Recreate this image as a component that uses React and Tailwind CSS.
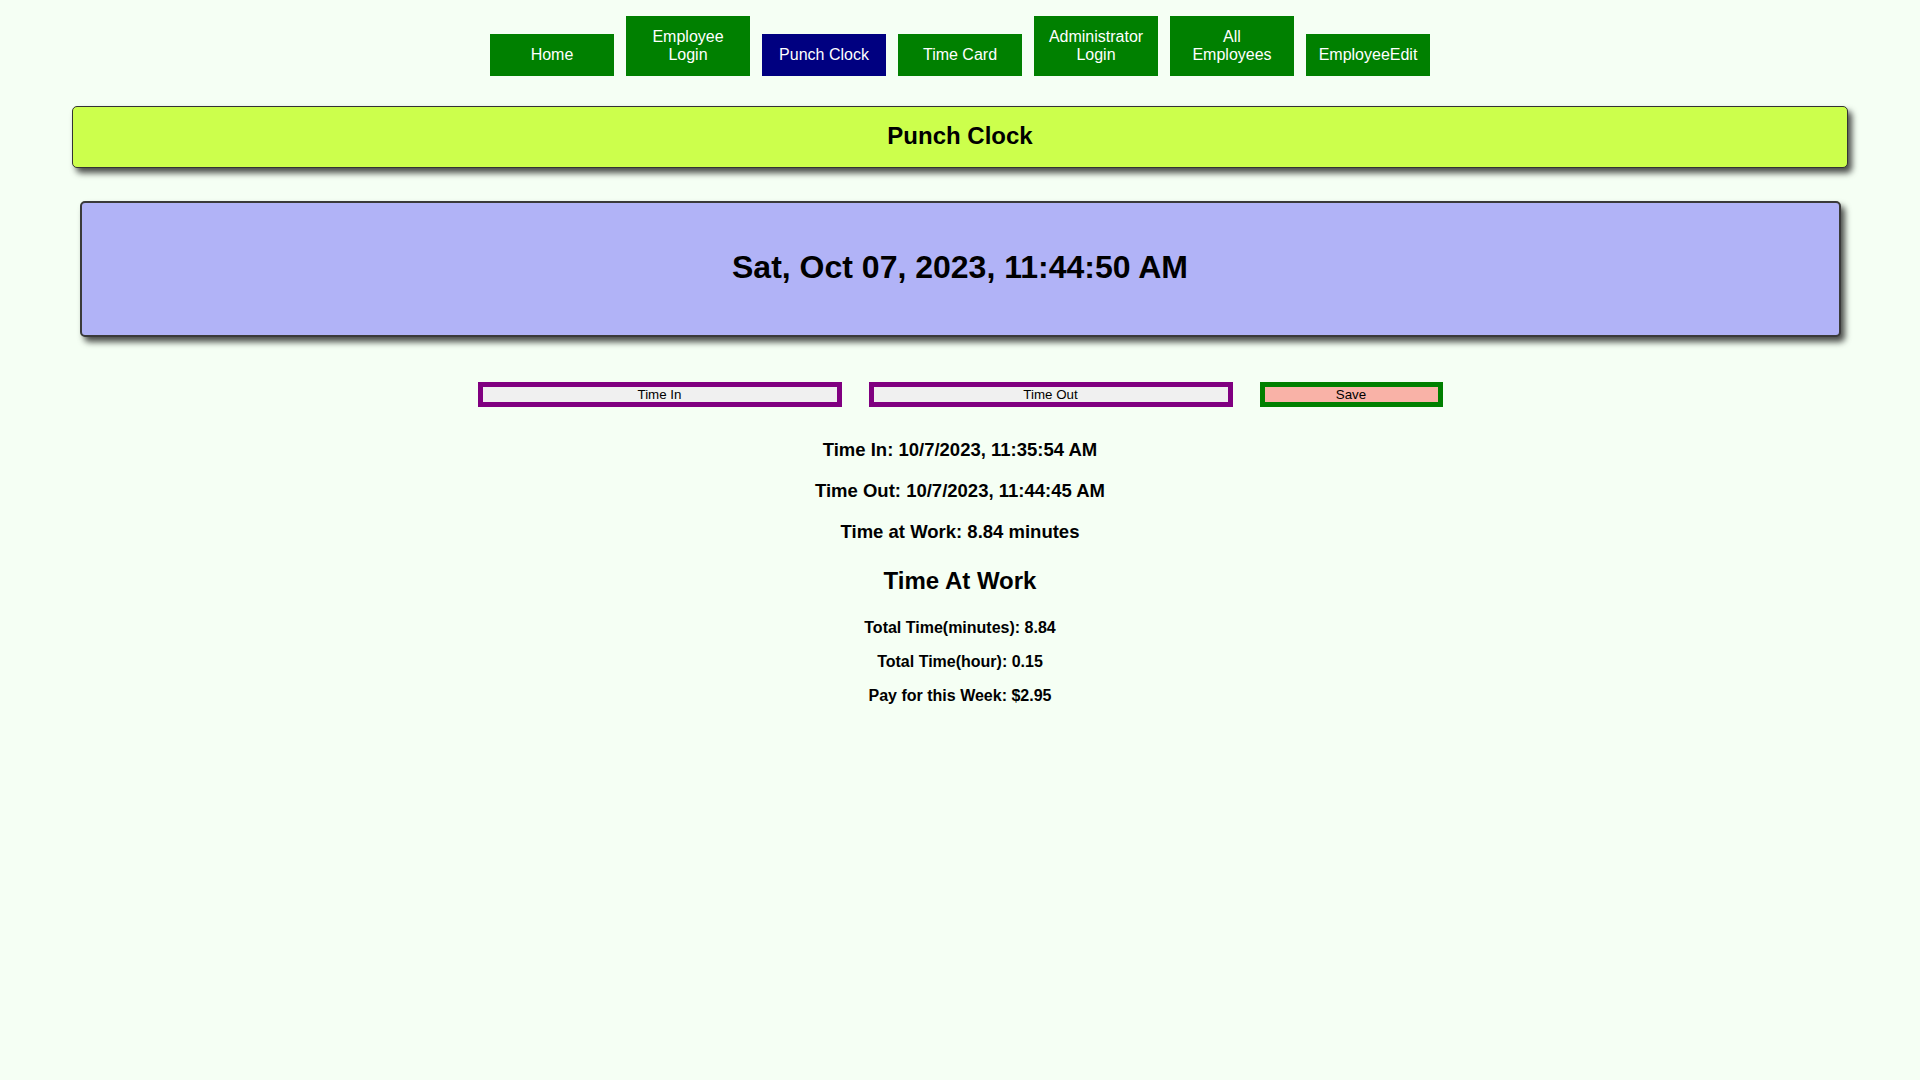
import React from 'react';

const navItems = [
  { label: 'Home' },
  { label: 'Employee Login', lines: ['Employee', 'Login'] },
  { label: 'Punch Clock', active: true },
  { label: 'Time Card' },
  { label: 'Administrator Login', lines: ['Administrator', 'Login'] },
  { label: 'All Employees', lines: ['All', 'Employees'] },
  { label: 'EmployeeEdit' },
];

const NavButton = ({ item }) => (
  <button
    className={`w-[124px] px-3 py-3 text-white text-[16px] leading-[18px] text-center ${
      item.active ? 'bg-[#000080]' : 'bg-[#008000]'
    }`}
  >
    {item.lines
      ? item.lines.map((l) => (
          <span key={l} className="block">
            {l}
          </span>
        ))
      : item.label}
  </button>
);

export default function App() {
  return (
    <div
      className="min-h-screen w-full bg-[#f5fff4] text-black"
      style={{ fontFamily: '"Liberation Sans", Arial, sans-serif' }}
    >
      {/* nav */}
      <nav className="flex justify-center items-end gap-3 pt-4">
        {navItems.map((item) => (
          <NavButton key={item.label} item={item} />
        ))}
      </nav>

      {/* page title */}
      <div className="mt-[30px] mx-auto w-[1776px] h-[62px] pb-[2px] flex items-center justify-center bg-[#ccff4c] border border-[#333] rounded-[5px] shadow-[4px_5px_6px_rgba(0,0,0,0.7)]">
        <h2 className="text-[24px] font-bold">Punch Clock</h2>
      </div>

      {/* clock */}
      <div className="mt-[33px] mx-auto w-[1761px] h-[136px] pb-[4px] flex items-center justify-center bg-[#b1b3f7] border-2 border-[#3a3a3a] rounded-[5px] shadow-[4px_5px_6px_rgba(0,0,0,0.7)]">
        <h1 className="text-[32px] font-bold">Sat, Oct 07, 2023, 11:44:50 AM</h1>
      </div>

      {/* punch buttons */}
      <div className="mt-[45px] flex justify-center gap-[27px]">
        <button className="w-[364px] h-[25px] border-[5px] border-[#800080] bg-[#f0f0f0] text-[13.33px] leading-none">
          Time In
        </button>
        <button className="w-[364px] h-[25px] border-[5px] border-[#800080] bg-[#f0f0f0] text-[13.33px] leading-none">
          Time Out
        </button>
        <button className="w-[183px] h-[25px] border-[5px] border-[#008000] bg-[#f9b2a7] text-[13.33px] leading-none">
          Save
        </button>
      </div>

      {/* results */}
      <div className="mt-[32px] flex flex-col items-center font-bold">
        <p className="text-[18.5px] leading-[22px]">Time In: 10/7/2023, 11:35:54 AM</p>
        <p className="mt-[19px] text-[18.5px] leading-[22px]">Time Out: 10/7/2023, 11:44:45 AM</p>
        <p className="mt-[19px] text-[18.5px] leading-[22px]">Time at Work: 8.84 minutes</p>
        <h2 className="mt-[24px] text-[24px] leading-[28px]">Time At Work</h2>
        <p className="mt-[23px] text-[16px] leading-[20px]">Total Time(minutes): 8.84</p>
        <p className="mt-[14px] text-[16px] leading-[20px]">Total Time(hour): 0.15</p>
        <p className="mt-[14px] text-[16px] leading-[20px]">Pay for this Week: $2.95</p>
      </div>
    </div>
  );
}
